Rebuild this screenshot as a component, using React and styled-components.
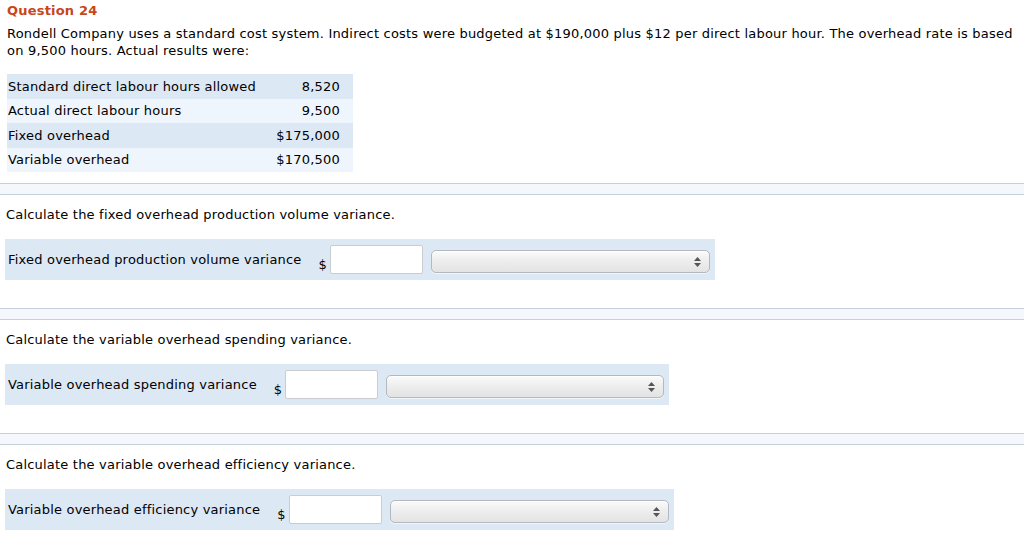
import React from "react";
import styled, { createGlobalStyle } from "styled-components";

const GlobalStyle = createGlobalStyle`
  body {
    margin: 0;
    background: #fff;
    font-family: "DejaVu Sans", Verdana, sans-serif;
    font-size: 13px;
    letter-spacing: 0.2px;
    color: #000;
  }
`;

const facts = [
  ["Standard direct labour hours allowed", "8,520"],
  ["Actual direct labour hours", "9,500"],
  ["Fixed overhead", "$175,000"],
  ["Variable overhead", "$170,500"],
];

const parts = [
  {
    prompt: "Calculate the fixed overhead production volume variance.",
    label: "Fixed overhead production volume variance",
    selectWidth: 279,
  },
  {
    prompt: "Calculate the variable overhead spending variance.",
    label: "Variable overhead spending variance",
    selectWidth: 278,
  },
  {
    prompt: "Calculate the variable overhead efficiency variance.",
    label: "Variable overhead efficiency variance",
    selectWidth: 279,
  },
];

const Page = styled.div`
  padding-top: 2px;
`;

const Intro = styled.div`
  padding: 0 7px;
`;

const Title = styled.h2`
  margin: 0;
  font-size: 13px;
  font-weight: bold;
  line-height: 17px;
  color: #c7461a;
`;

const Text = styled.p`
  margin: 6px 0 0;
  line-height: 17px;
`;

const Facts = styled.table`
  margin-top: 15px;
  width: 346px;
  border-collapse: collapse;
  td {
    height: 24.5px;
    padding: 0 1px;
    line-height: 17px;
  }
  td:last-child {
    text-align: right;
    padding-right: 13px;
  }
  tr:nth-child(odd) {
    background: #dde8f5;
  }
  tr:nth-child(even) {
    background: #eef5fd;
  }
`;

const Divider = styled.div`
  height: 10px;
  border-top: 1px solid #c6cfdc;
  border-bottom: 1px solid #c6cfdc;
  background: #f4f8fc;
  margin-top: ${(p) => p.$top}px;
`;

const Part = styled.section`
  padding: 11px 5px 0 5px;
`;

const Prompt = styled.p`
  margin: 0 0 16px 1px;
  line-height: 17px;
`;

const AnswerRow = styled.div`
  display: inline-flex;
  align-items: center;
  height: 41px;
  padding: 0 5px 0 3px;
  background: #dde8f5;
`;

const Label = styled.span`
  padding-right: 17px;
  line-height: 17px;
`;

const Dollar = styled.span`
  align-self: flex-end;
  margin-bottom: 7px;
  margin-right: 3px;
  line-height: 17px;
`;

const AmountInput = styled.input`
  width: 93px;
  height: 29px;
  box-sizing: border-box;
  border: 1px solid #c9cdd2;
  border-radius: 2px;
  background: #fff;
  margin: 0 8px 0 0;
  padding: 0 4px;
  font: inherit;
`;

const SelectBox = styled.div`
  position: relative;
  width: ${(p) => p.$width}px;
  height: 23px;
  margin-top: 4px;
  box-sizing: border-box;
  border: 1px solid #b5b8bc;
  border-radius: 5px;
  background: linear-gradient(#fbfbfb, #eeeeee 45%, #e3e3e3);
  box-shadow: inset 0 1px 0 #fff, 0 1px 0 rgba(255, 255, 255, 0.6);
`;

const Arrows = styled.svg`
  position: absolute;
  right: 8px;
  top: 6px;
`;

function Select({ width }) {
  return (
    <SelectBox $width={width}>
      <Arrows width="7" height="10" viewBox="0 0 7 10">
        <polygon points="3.5,0 7,4 0,4" fill="#555" />
        <polygon points="0,6 7,6 3.5,10" fill="#555" />
      </Arrows>
    </SelectBox>
  );
}

export default function App() {
  return (
    <Page>
      <GlobalStyle />
      <Intro>
        <Title>Question 24</Title>
        <Text>
          Rondell Company uses a standard cost system. Indirect costs were
          budgeted at $190,000 plus $12 per direct labour hour. The overhead
          rate is based on 9,500 hours. Actual results were:
        </Text>
        <Facts>
          <tbody>
            {facts.map(([name, value]) => (
              <tr key={name}>
                <td>{name}</td>
                <td>{value}</td>
              </tr>
            ))}
          </tbody>
        </Facts>
      </Intro>
      {parts.map((part, i) => (
        <React.Fragment key={part.label}>
          <Divider $top={i === 0 ? 11 : 28} />
          <Part>
            <Prompt>{part.prompt}</Prompt>
            <AnswerRow>
              <Label>{part.label}</Label>
              <Dollar>$</Dollar>
              <AmountInput type="text" />
              <Select width={part.selectWidth} />
            </AnswerRow>
          </Part>
        </React.Fragment>
      ))}
    </Page>
  );
}
